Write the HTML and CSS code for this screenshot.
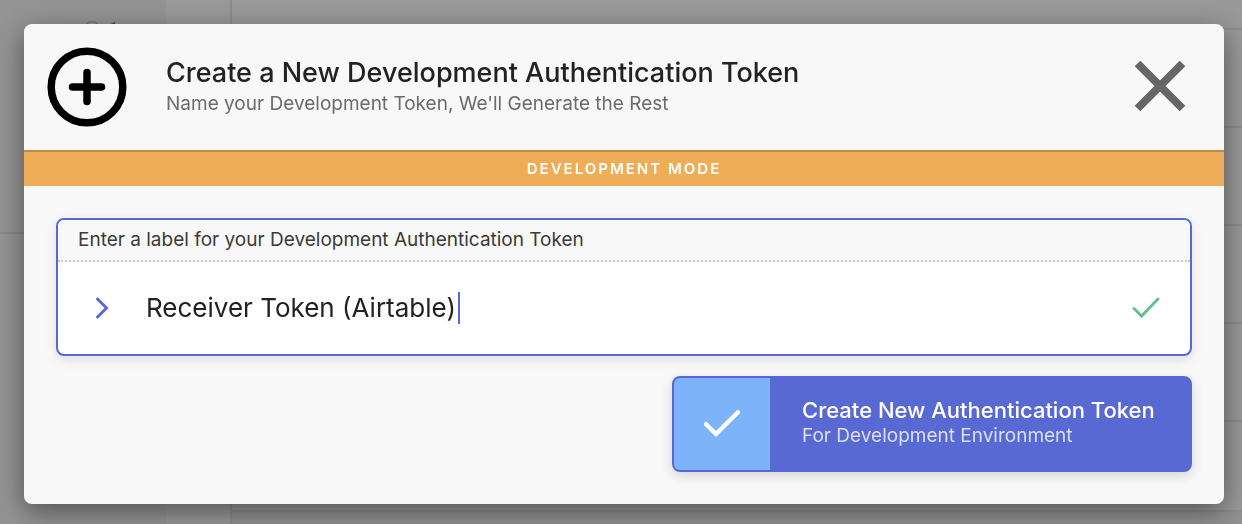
FILE: index.html
```
<!DOCTYPE html>
<html lang="en">
<head>
<meta charset="utf-8">
<title>Create Token</title>
<link rel="stylesheet" href="styles.css">
</head>
<body>
<div class="page" aria-hidden="true">
  <div class="sidebar">
    <div class="sidebar-top">
      <svg class="sidebar-icon" viewBox="0 0 34 16"><circle cx="8" cy="8" r="6.5" fill="none" stroke="#777" stroke-width="1.5"/><path d="M8 4v4" stroke="#777" stroke-width="1.5"/><path d="M27 5l3-2v6" fill="none" stroke="#555" stroke-width="2"/></svg>
    </div>
  </div>
  <div class="gutter"></div>
  <div class="content">
    <div class="row row-first"></div>
    <div class="row"></div>
    <div class="row"></div>
    <div class="row"></div>
    <div class="row"></div>
    <div class="row row-last"></div>
    <div class="row-rest"></div>
  </div>
</div>
<div class="overlay">
  <form class="dialog" role="dialog" aria-labelledby="dialog-title">
    <header class="dialog-header">
      <svg class="add-icon" viewBox="0 0 80 80" fill="none" stroke="#000" stroke-width="7.5" stroke-linecap="round"><circle cx="40" cy="40" r="35.8"/><path d="M40 25.5v29M25.5 40h29"/></svg>
      <div class="heading">
        <h1 class="title" id="dialog-title">Create a New Development Authentication Token</h1>
        <p class="subtitle">Name your Development Token, We'll Generate the Rest</p>
      </div>
      <button class="close" type="button" aria-label="Close">
        <svg class="close-icon" viewBox="0 0 52 52" stroke="#666" stroke-width="8"><path d="M3.5 2.5l45 45M48.500 2.500l-45 45"/></svg>
      </button>
    </header>
    <div class="mode">DEVELOPMENT MODE</div>
    <div class="dialog-body">
      <div class="field">
        <label class="field-label" for="token-label">Enter a label for your Development Authentication Token</label>
        <div class="field-row">
          <svg class="chevron" viewBox="0 0 16 24" fill="none" stroke="#5869d4" stroke-width="3" stroke-linecap="round"><path d="M3.500 3l9 9-9 9"/></svg>
          <div class="entry">
            <input class="field-input" id="token-label" type="text" value="Receiver Token (Airtable)">
            <span class="caret"></span>
          </div>
          <svg class="valid" viewBox="0 0 28 22" fill="none" stroke="#6bbd92" stroke-width="3" stroke-linecap="round"><path d="M2 11.500l7.600 7.500L26 2"/></svg>
        </div>
      </div>
      <button class="submit" type="submit">
        <span class="submit-icon">
          <svg class="submit-check" viewBox="0 0 36 28" fill="none" stroke="#fff" stroke-width="4.400" stroke-linecap="round"><path d="M2 14.200l10 9.800L34 2.300"/></svg>
        </span>
        <span class="submit-text">
          <span class="submit-title">Create New Authentication Token</span>
          <span class="submit-note">For Development Environment</span>
        </span>
      </button>
    </div>
  </form>
</div>
</body>
</html>
```
FILE: styles.css
```
* { box-sizing: border-box; }
body { margin: 0; font-family: Inter, "Liberation Sans", sans-serif; color: #222; background: #999; }
.page { display: flex; height: 100vh; overflow: hidden; background: #999; }
.sidebar { width: 166px; background: #949494; }
.sidebar-top { height: 234px; padding: 20px 0 0 84px; border-bottom: 2px solid #888; }
.sidebar-icon { display: block; width: 34px; height: 16px; }
.gutter { width: 64px; }
.content { flex: 1; border-left: 2px solid #8c8c8c; }
.row { height: 98px; border-bottom: 2px solid #8c8c8c; }
.row-first { height: 30px; }
.row-last { height: 90px; }
.row-rest { height: 40px; background: #929292; }
.overlay { position: fixed; inset: 0; padding: 24px 18px 20px 24px; }
.dialog { background: #f8f8f8; border-radius: 8px; overflow: hidden; box-shadow: 0 8px 28px rgba(0, 0, 0, .45); }
.dialog-header { display: flex; align-items: center; height: 126px; padding: 0 38px 0 23px; }
.add-icon { flex: none; width: 80px; height: 80px; }
.heading { flex: 1; margin-left: 39px; }
.title { margin: 0; font-size: 27px; line-height: 34px; font-weight: 500; }
.subtitle { margin: 0; font-size: 19px; line-height: 28px; color: #6b6b6b; }
.close { padding: 0; border: 0; background: none; }
.close-icon { display: block; width: 52px; height: 52px; }
.mode { border-top: 2px solid #bd8a45; background: #f0ad58; color: #fff; font-size: 15px; line-height: 34px; font-weight: 600; letter-spacing: 2px; text-align: center; }
.dialog-body { display: flex; flex-direction: column; gap: 20px; padding: 32px; }
.field { border: 2px solid #5869d4; border-radius: 8px; overflow: hidden; background: #fff; box-shadow: 0 4px 12px rgba(0, 0, 0, .1); }
.field-label { display: block; padding: 0 20px; background: #f8f8f8; border-bottom: 2px dotted #ccc; font-size: 19px; line-height: 40px; color: #3a3a3a; }
.field-row { display: flex; align-items: center; height: 92px; padding: 0 30px 0 36px; }
.chevron { flex: none; width: 16px; height: 24px; }
.entry { display: flex; flex: 1; align-items: center; gap: 2px; margin-left: 36px; }
.field-input { field-sizing: content; padding: 0; border: 0; outline: 0; background: none; font: inherit; font-size: 26px; line-height: 36px; color: #222; }
.caret { width: 2px; height: 32px; background: #5869d4; }
.valid { flex: none; width: 28px; height: 22px; }
.submit { display: flex; align-self: flex-end; min-width: 520px; height: 96px; padding: 0; border: 2px solid #5869d4; border-radius: 8px; overflow: hidden; background: #5869d4; color: #fff; font: inherit; text-align: left; box-shadow: 0 4px 12px rgba(0, 0, 0, .14); }
.submit-icon { display: flex; align-items: center; justify-content: center; width: 96px; height: 92px; background: #7db4f9; }
.submit-check { width: 36px; height: 28px; }
.submit-text { display: flex; flex-direction: column; padding: 18px 32px 0; }
.submit-title { font-size: 22px; line-height: 28px; font-weight: 500; }
.submit-note { font-size: 19px; line-height: 24px; color: #dcdff6; }
```
